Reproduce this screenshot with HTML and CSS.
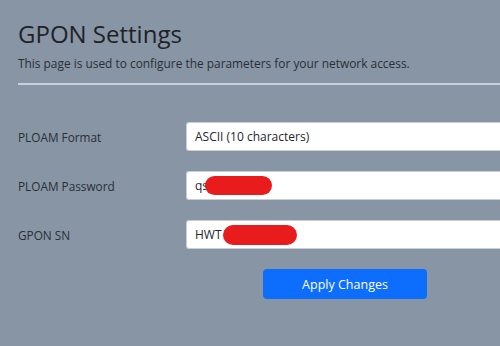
FILE: index.html
```html
<!DOCTYPE html>
<html>
<head>
<meta charset="utf-8">
<link rel="stylesheet" href="styles.css">
</head>
<body>
<div class="page">
  <h1 class="title">GPON Settings</h1>
  <p class="intro">This page is used to configure the parameters for your network access.</p>
  <div class="rule"></div>
  <form class="form">
    <div class="row">
      <label class="label">PLOAM Format</label>
      <div class="field">ASCII (10 characters)</div>
    </div>
    <div class="row">
      <label class="label">PLOAM Password</label>
      <div class="field">qs<span class="redact redact-pass"></span></div>
    </div>
    <div class="row">
      <label class="label">GPON SN</label>
      <div class="field">HWT<span class="redact redact-sn"></span></div>
    </div>
    <div class="actions">
      <button type="button" class="btn">Apply Changes</button>
    </div>
  </form>
</div>
</body>
</html>
```

FILE: styles.css
```css
html, body {
  margin: 0;
  padding: 0;
  width: 500px;
  height: 346px;
  overflow: hidden;
  background: #8795a5;
  font-family: "Open Sans", "Noto Sans", sans-serif;
  color: #2b2f35;
}
.page {
  padding: 18px 0 0 18px;
}
.title {
  margin: 0;
  font-size: 24px;
  font-weight: 400;
  line-height: 32px;
  color: #1f2329;
}
.intro {
  margin: 4px 0 0 0;
  font-size: 11.9px;
  line-height: 18px;
  color: #2b2f35;
}
.rule {
  margin-top: 11px;
  height: 2px;
  background: #c9d0d8;
}
.form {
  padding-top: 37px;
}
.row {
  display: flex;
  align-items: center;
  height: 29px;
  margin-bottom: 20px;
}
.label {
  width: 168px;
  flex: none;
  font-size: 11.8px;
  color: #2b2f35;
}
.field {
  flex: 1;
  height: 29px;
  box-sizing: border-box;
  background: #fff;
  border-radius: 3px 0 0 3px;
  padding: 0 8px;
  display: flex;
  align-items: center;
  font-size: 12px;
  color: #23272d;
  border: 1px solid #c8ced6;
  border-right: none;
}
.redact {
  display: inline-block;
  background: #e81c1c;
  border-radius: 10px;
}
.redact-pass {
  width: 67px;
  height: 19px;
  margin-left: -3px;
}
.redact-sn {
  width: 74px;
  height: 20px;
  margin-left: 1px;
}
.actions {
  padding-left: 245px;
}
.btn {
  width: 164px;
  height: 30px;
  border: none;
  border-radius: 4px;
  background: #0d6efd;
  color: #fff;
  font-family: "Open Sans", "Noto Sans", sans-serif;
  font-size: 12.5px;
}
```
